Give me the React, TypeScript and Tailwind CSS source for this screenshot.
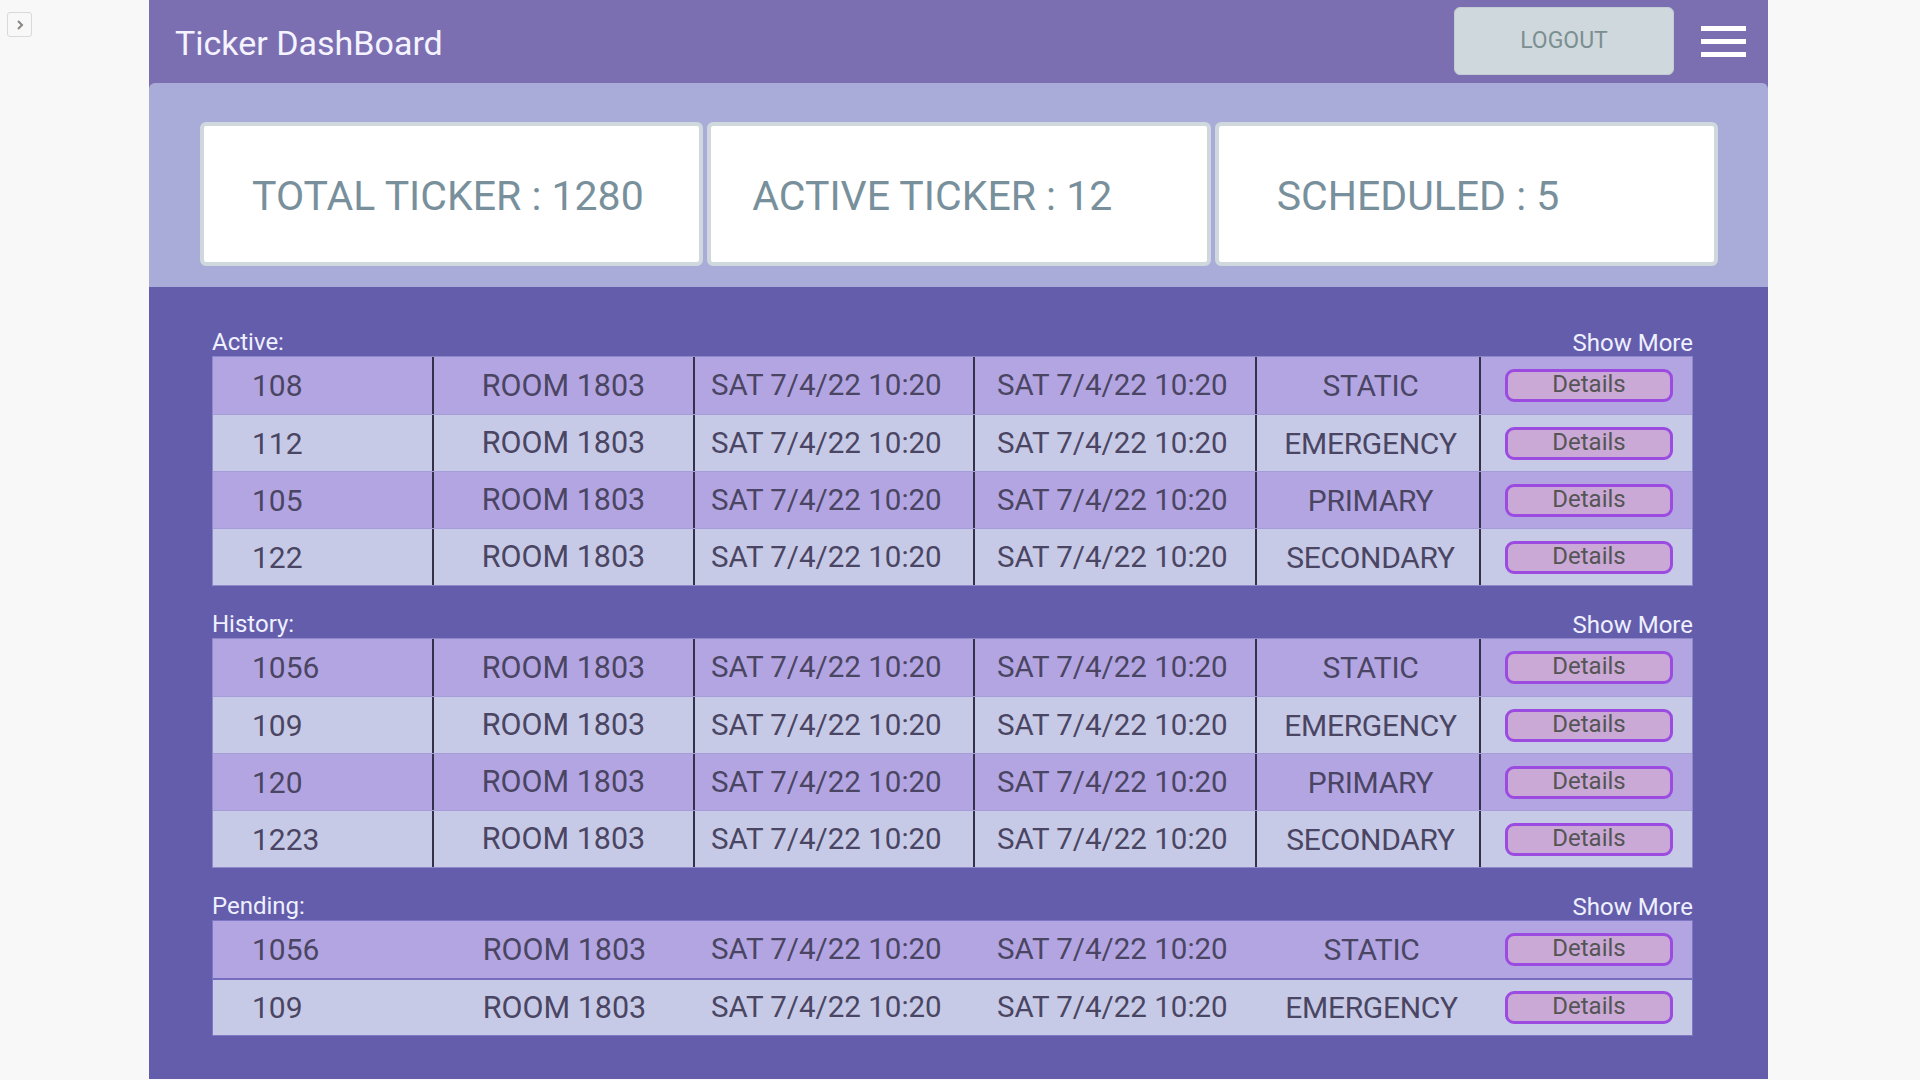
import React from "react";

type Row = { id: string; type: string };

const activeRows: Row[] = [
  { id: "108", type: "STATIC" },
  { id: "112", type: "EMERGENCY" },
  { id: "105", type: "PRIMARY" },
  { id: "122", type: "SECONDARY" },
];

const historyRows: Row[] = [
  { id: "1056", type: "STATIC" },
  { id: "109", type: "EMERGENCY" },
  { id: "120", type: "PRIMARY" },
  { id: "1223", type: "SECONDARY" },
];

const pendingRows: Row[] = [
  { id: "1056", type: "STATIC" },
  { id: "109", type: "EMERGENCY" },
];

const TickerTable = ({
  label,
  rows,
  plain = false,
}: {
  label: string;
  rows: Row[];
  plain?: boolean;
}) => {
  // plain = no column lines (pending list)
  const divider = plain ? "" : "border-r-2 border-[#33304a]";
  return (
    <div className="flex flex-col">
      <div className="flex items-end justify-between text-[24px] leading-[28px] text-[#eef0ff]">
        <span>{label}</span>
        <span className="translate-y-[1px]">Show More</span>
      </div>
      <div
        className={`border ${plain ? "border-[#7f76c6]" : "border-[#8f88cb]"}`}
      >
        {rows.map((r, i) => (
          <div
            key={i}
            className={`grid grid-cols-[221px_261px_280px_282px_224px_211px] h-[57px] text-[#4a4563] ${
              i % 2 === 0 ? "bg-[#b3a5e2]" : "bg-[#c7cae6]"
            } ${
              i === 0
                ? ""
                : plain
                ? "border-t-2 border-[#776dc0]"
                : "border-t border-[#a59dd8]"
            }`}
          >
            <div className={`flex items-center pl-[39px] text-[30px] ${divider}`}>
              {r.id}
            </div>
            <div
              className={`flex items-center justify-center text-[30.5px] ${divider}`}
            >
              ROOM 1803
            </div>
            <div className={`flex items-center pl-[16px] text-[29.5px] ${divider}`}>
              SAT 7/4/22 10:20
            </div>
            <div className={`flex items-center pl-[22px] text-[29.5px] ${divider}`}>
              SAT 7/4/22 10:20
            </div>
            <div
              className={`flex items-center justify-center pl-[5px] text-[30px] tracking-[-0.3px] ${divider}`}
            >
              {r.type}
            </div>
            <div className="flex items-center justify-center pl-[5px]">
              <button className="w-[168px] h-[33px] rounded-[9px] border-[3px] border-[#9b4be0] bg-[#caa9d6] text-[24px] leading-none pb-[3px] text-[#555555]">
                Details
              </button>
            </div>
          </div>
        ))}
      </div>
    </div>
  );
};

const StatBox = ({ text, pad }: { text: string; pad: string }) => (
  <div
    className={`h-[144px] flex items-center pt-[5px] bg-white border-4 border-[#cfd8dc] rounded-md text-[41px] text-[#78909c] ${pad}`}
  >
    {text}
  </div>
);

export default function App() {
  return (
    <div
      className="min-h-screen w-full bg-[#f8f8f8] flex"
      style={{ fontFamily: "Roboto, 'Noto Sans', sans-serif" }}
    >
      <div className="w-[149px] shrink-0 pt-[12px] pl-[7px]">
        <button className="w-[25px] h-[25px] flex items-center justify-center border border-[#d9d9d9] rounded-[3px] bg-[#f8f8f8]">
          <svg width="10" height="12" viewBox="0 0 10 12">
            <path
              d="M3 2 L7 6 L3 10"
              fill="none"
              stroke="#8c8580"
              strokeWidth="2"
            />
          </svg>
        </button>
      </div>

      <div className="w-[1619px] shrink-0 flex flex-col">
        <div className="h-[83px] bg-[#7b6fb2] flex items-center justify-between pl-[26px] pr-[22px]">
          <h1 className="text-[34px] text-[#f4f3ff] mt-[4px]">Ticker DashBoard</h1>
          <div className="flex items-center gap-[27px]">
            <button className="w-[220px] h-[68px] mt-[-1px] rounded-md bg-[#cfd8dc] border border-[#c3ccd4] text-[23px] text-[#7b8f91]">
              LOGOUT
            </button>
            <div className="flex flex-col gap-[8px] w-[45px]">
              <span className="h-[5px] bg-white" />
              <span className="h-[5px] bg-white" />
              <span className="h-[5px] bg-white" />
            </div>
          </div>
        </div>

        <div className="bg-[#7b6fb2]">
          <div className="bg-[#a9acd9] rounded-t-md pt-[39px] pb-[21px] pl-[51px] pr-[50px]">
            <div className="grid grid-cols-3 gap-1">
              <StatBox text="TOTAL TICKER : 1280" pad="pl-[48px]" />
              <StatBox text="ACTIVE TICKER : 12" pad="pl-[41px]" />
              <StatBox text="SCHEDULED : 5" pad="pl-[58px]" />
            </div>
          </div>
        </div>

        <div className="bg-[#645dab] pt-[41px] pb-[43px] pl-[63px] pr-[75px] flex flex-col gap-[24px]">
          <TickerTable label="Active:" rows={activeRows} />
          <TickerTable label="History:" rows={historyRows} />
          <TickerTable label="Pending:" rows={pendingRows} plain />
        </div>
      </div>
    </div>
  );
}
